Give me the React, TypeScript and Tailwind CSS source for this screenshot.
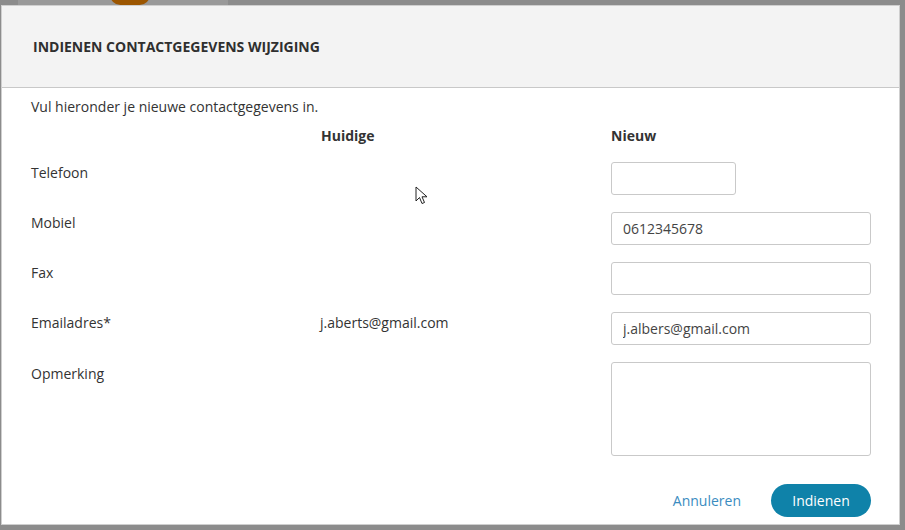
import React from "react";

const rows = [
    { label: "Telefoon", current: "", value: "", short: true },
    { label: "Mobiel", current: "", value: "0612345678" },
    { label: "Fax", current: "", value: "" },
    { label: "Emailadres*", current: "j.aberts@gmail.com", value: "j.albers@gmail.com" },
];

const App = () => {
    return (
        <div
            className="relative w-[905px] h-[530px] overflow-hidden bg-[#8c8c8c] text-[#333333]"
            style={{ fontFamily: '"Open Sans", "Noto Sans", sans-serif' }}
        >
            {/* page behind the backdrop */}
            <div className="absolute left-[18px] top-0 w-[210px] h-[5px] bg-[#999999]" />
            <div className="absolute left-[110px] -top-[16px] w-[40px] h-[21px] rounded-full bg-[#9c5600]" />

            <div className="absolute left-[1px] top-[5px] w-[899px] h-[520px] bg-white border border-[#cfcfcf] flex flex-col">
                <div className="h-[82px] shrink-0 bg-[#f3f3f3] border-b border-[#c8c8c8] flex items-center pl-[31px]">
                    <h1 className="text-[14px] font-bold uppercase text-[#2f2f2f]">
                        Indienen contactgegevens wijziging
                    </h1>
                </div>

                <div className="flex-1 pl-[29px] pr-[28px] pt-[9px] text-[14px]">
                    <p className="leading-[20px]">Vul hieronder je nieuwe contactgegevens in.</p>

                    <div className="grid grid-cols-[289px_291px_260px] mt-[9px]">
                        <div />
                        <div className="pl-[1px] font-bold leading-[20px]">Huidige</div>
                        <div className="font-bold leading-[20px]">Nieuw</div>
                    </div>

                    <div className="mt-[16px] flex flex-col gap-[17px]">
                        {rows.map((row) => (
                            <div key={row.label} className="grid grid-cols-[289px_291px_260px] items-start">
                                <div className="pt-[1px] leading-[20px]">{row.label}</div>
                                <div className="pt-[1px] leading-[20px]">{row.current}</div>
                                <input
                                    type="text"
                                    defaultValue={row.value}
                                    className={
                                        (row.short ? "w-[125px] " : "w-[260px] ") +
                                        "h-[33px] border border-[#c9c9c9] rounded-[3px] px-[11px] text-[14px] text-[#444444] outline-none"
                                    }
                                    style={{ fontFamily: '"Open Sans", "Noto Sans", sans-serif' }}
                                />
                            </div>
                        ))}
                        <div className="grid grid-cols-[289px_291px_260px] items-start">
                            <div className="pt-[2px] leading-[20px]">Opmerking</div>
                            <div />
                            <textarea className="w-[260px] h-[94px] border border-[#c9c9c9] rounded-[3px] resize-none outline-none" />
                        </div>
                    </div>

                    <div className="flex justify-end items-center gap-[30px] mt-[28px]">
                        <button className="text-[14px] text-[#3a8cbf]">Annuleren</button>
                        <button className="w-[100px] h-[33px] rounded-full bg-[#0f82a9] text-white text-[14px]">
                            Indienen
                        </button>
                    </div>
                </div>
            </div>

            {/* mouse pointer */}
            <svg className="absolute left-[415px] top-[186px]" width="14" height="20" viewBox="0 0 14 20">
                <path d="M1 1 L1 15 L4.5 11.5 L7 17.5 L9.5 16.5 L7 10.8 L12 10.8 Z" fill="white" stroke="#222" strokeWidth="1" strokeLinejoin="round" />
            </svg>
        </div>
    );
};

export default App;
